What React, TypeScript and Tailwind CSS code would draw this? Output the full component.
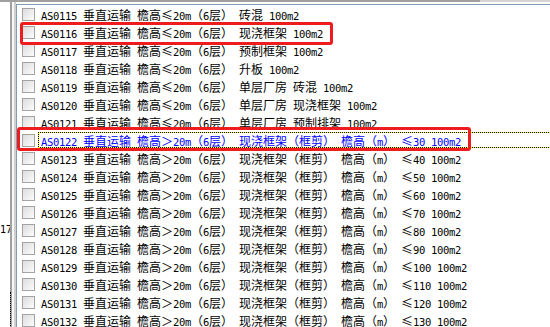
import React from 'react';

interface Item {
  code: string;
  text: string;
}

const items: Item[] = [
  { code: 'AS0115', text: '垂直运输 檐高≤20m（6层） 砖混 100m2' },
  { code: 'AS0116', text: '垂直运输 檐高≤20m（6层） 现浇框架 100m2' },
  { code: 'AS0117', text: '垂直运输 檐高≤20m（6层） 预制框架 100m2' },
  { code: 'AS0118', text: '垂直运输 檐高≤20m（6层） 升板 100m2' },
  { code: 'AS0119', text: '垂直运输 檐高≤20m（6层） 单层厂房 砖混 100m2' },
  { code: 'AS0120', text: '垂直运输 檐高≤20m（6层） 单层厂房 现浇框架 100m2' },
  { code: 'AS0121', text: '垂直运输 檐高≤20m（6层） 单层厂房 预制排架 100m2' },
  { code: 'AS0122', text: '垂直运输 檐高＞20m（6层） 现浇框架（框剪） 檐高（m） ≤30 100m2' },
  { code: 'AS0123', text: '垂直运输 檐高＞20m（6层） 现浇框架（框剪） 檐高（m） ≤40 100m2' },
  { code: 'AS0124', text: '垂直运输 檐高＞20m（6层） 现浇框架（框剪） 檐高（m） ≤50 100m2' },
  { code: 'AS0125', text: '垂直运输 檐高＞20m（6层） 现浇框架（框剪） 檐高（m） ≤60 100m2' },
  { code: 'AS0126', text: '垂直运输 檐高＞20m（6层） 现浇框架（框剪） 檐高（m） ≤70 100m2' },
  { code: 'AS0127', text: '垂直运输 檐高＞20m（6层） 现浇框架（框剪） 檐高（m） ≤80 100m2' },
  { code: 'AS0128', text: '垂直运输 檐高＞20m（6层） 现浇框架（框剪） 檐高（m） ≤90 100m2' },
  { code: 'AS0129', text: '垂直运输 檐高＞20m（6层） 现浇框架（框剪） 檐高（m） ≤100 100m2' },
  { code: 'AS0130', text: '垂直运输 檐高＞20m（6层） 现浇框架（框剪） 檐高（m） ≤110 100m2' },
  { code: 'AS0131', text: '垂直运输 檐高＞20m（6层） 现浇框架（框剪） 檐高（m） ≤120 100m2' },
  { code: 'AS0132', text: '垂直运输 檐高＞20m（6层） 现浇框架（框剪） 檐高（m） ≤130 100m2' },
];

// half-width chars take 6px, full-width 12px, like the old bitmap font
const Cells: React.FC<{ value: string }> = ({ value }) => (
  <>
    {Array.from(value).map((c, i) =>
      c.charCodeAt(0) > 0xff ? (
        <span key={i} className="inline-block w-[12px] text-center font-['Noto_Sans_CJK_SC',sans-serif] text-[12px]">{c}</span>
      ) : (
        <span key={i} className="inline-block w-[6px] font-['DejaVu_Sans_Mono',monospace] text-[10.5px] tracking-[-0.3px]">{c}</span>
      )
    )}
  </>
);

const Row: React.FC<{ item: Item; selected: boolean }> = ({ item, selected }) => (
  <div className="flex h-[18px] items-center">
    <div className="ml-[5px] h-[13px] w-[13px] shrink-0 border border-[#a3a3a3] bg-gradient-to-br from-[#dcdcdc] to-[#fdfdfd]" />
    <div className={`relative ml-[6px] h-[18px] flex-1 whitespace-pre leading-[18px] ${selected ? 'text-[#0000ff]' : 'text-black'}`}>
      {selected && (
        <>
          <div className="absolute left-[-3px] right-0 top-[1px] h-[1px] bg-[repeating-linear-gradient(90deg,#000_0_1px,#ffff00_1px_2px)]" />
          <div className="absolute left-[-3px] right-0 bottom-[1px] h-[1px] bg-[repeating-linear-gradient(90deg,#000_0_1px,#ffff00_1px_2px)]" />
          <div className="absolute left-[-3px] top-[1px] bottom-[1px] w-[1px] bg-[repeating-linear-gradient(180deg,#000_0_1px,#ffff00_1px_2px)]" />
        </>
      )}
      <Cells value={item.code + ' ' + item.text} />
    </div>
  </div>
);

export default function App() {
  return (
    <div className="relative h-[327px] w-[550px] overflow-hidden bg-white">
      {/* top strip */}
      <div className="flex h-[2px]">
        <div className="w-[480px] bg-[#a0a0a0]" />
        <div className="flex-1 bg-[#d4d4d4]" />
      </div>
      <div className="flex h-[325px]">
        {/* left pane and splitter */}
        <div className="w-[10px] overflow-hidden bg-white">
          <div className="mt-[219px] text-right font-['DejaVu_Sans_Mono',monospace] text-[10px] leading-[18px] text-black">17</div>
        </div>
        <div className="w-[2px] bg-[#a0a0a0]">
          <div className="mt-[290px] h-[40px] border-l border-dotted border-black" />
        </div>
        <div className="w-[2px] bg-[#f6f6f6]" />
        <div className="w-[2px] bg-[#cfcfcf]" />
        {/* list */}
        <div className="flex flex-1 flex-col pt-[2px]">
          <div className="flex-1 border-l border-t border-[#7f9db9]">
            {items.map((item, i) => (
              <Row key={item.code} item={item} selected={i === 7} />
            ))}
          </div>
        </div>
      </div>

      {/* red annotation boxes */}
      <div className="absolute left-[20px] top-[22px] h-[23px] w-[313px] rounded-[3px] border-[3px] border-[#ee1c1c]" />
      <div className="absolute left-[17px] top-[127px] h-[24px] w-[454px] rounded-[3px] border-[3px] border-[#ee1c1c]" />
    </div>
  );
}
